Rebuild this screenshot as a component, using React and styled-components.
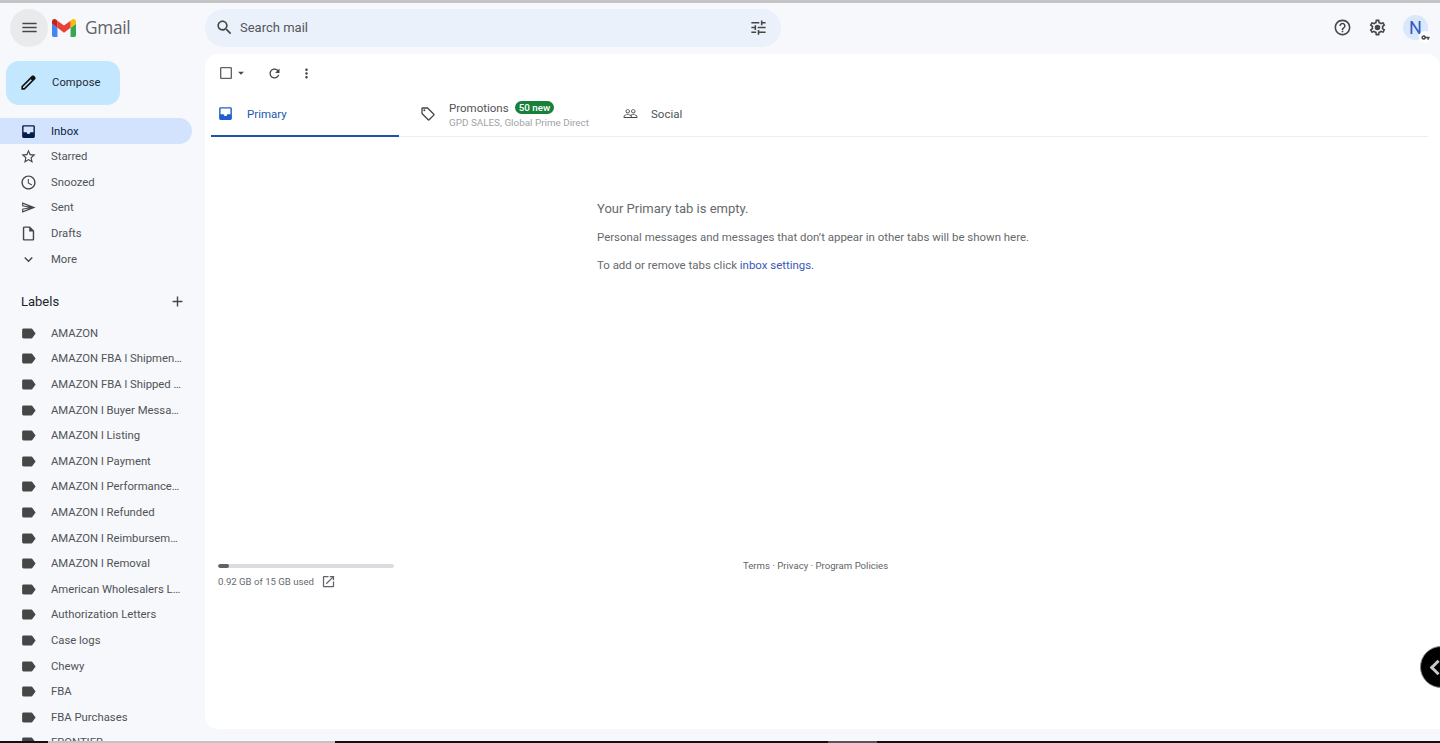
import styled, { createGlobalStyle } from "styled-components";

const GlobalStyle = createGlobalStyle`
  html, body {
    margin: 0;
    height: 100%;
    overflow: hidden;
  }
  body {
    background: #f6f8fc;
    font-family: Roboto, "Liberation Sans", sans-serif;
  }
  * {
    box-sizing: border-box;
  }
`;

const paths = {
  menu: "M3 18h18v-2H3v2zm0-5h18v-2H3v2zm0-7v2h18V6H3z",
  search:
    "M15.5 14h-.79l-.28-.27C15.41 12.59 16 11.11 16 9.5 16 5.91 13.09 3 9.5 3S3 5.91 3 9.5 5.91 16 9.5 16c1.61 0 3.09-.59 4.23-1.57l.27.28v.79l5 4.99L20.49 19l-4.99-5zm-6 0C7.01 14 5 11.99 5 9.5S7.01 5 9.5 5 14 7.01 14 9.5 11.99 14 9.5 14z",
  tune: "M3 17v2h6v-2H3zM3 5v2h10V5H3zm10 16v-2h8v-2h-8v-2h-2v6h2zM7 9v2H3v2h4v2h2V9H7zm14 4v-2H11v2h10zm-6-4h2V7h4V5h-4V3h-2v6z",
  help: "M11 18h2v-2h-2v2zm1-16C6.48 2 2 6.48 2 12s4.48 10 10 10 10-4.48 10-10S17.52 2 12 2zm0 18c-4.41 0-8-3.59-8-8s3.59-8 8-8 8 3.59 8 8-3.59 8-8 8zm0-14c-2.21 0-4 1.79-4 4h2c0-1.1.9-2 2-2s2 .9 2 2c0 2-3 1.75-3 5h2c0-2.25 3-2.5 3-5 0-2.21-1.79-4-4-4z",
  settings:
    "M19.43 12.98c.04-.32.07-.64.07-.98 0-.34-.03-.66-.07-.98l2.11-1.65c.19-.15.24-.42.12-.64l-2-3.46c-.09-.16-.26-.25-.44-.25-.06 0-.12.01-.17.03l-2.49 1c-.52-.4-1.08-.73-1.69-.98l-.38-2.65C14.46 2.18 14.25 2 14 2h-4c-.25 0-.46.18-.49.42l-.38 2.65c-.61.25-1.17.59-1.69.98l-2.49-1c-.06-.02-.12-.03-.18-.03-.17 0-.34.09-.43.25l-2 3.46c-.13.22-.07.49.12.64l2.11 1.65c-.04.32-.07.65-.07.98 0 .33.03.66.07.98l-2.11 1.65c-.19.15-.24.42-.12.64l2 3.46c.09.16.26.25.44.25.06 0 .12-.01.17-.03l2.49-1c.52.4 1.08.73 1.69.98l.38 2.65c.03.24.24.42.49.42h4c.25 0 .46-.18.49-.42l.38-2.65c.61-.25 1.17-.59 1.69-.98l2.49 1c.06.02.12.03.18.03.17 0 .34-.09.43-.25l2-3.46c.12-.22.07-.49-.12-.64l-2.11-1.65zm-1.98-1.71c.04.31.05.52.05.73 0 .21-.02.43-.05.73l-.14 1.13.89.7 1.08.84-.7 1.21-1.27-.51-1.04-.42-.9.68c-.43.32-.84.56-1.25.73l-1.06.43-.16 1.13-.2 1.35h-1.4l-.19-1.35-.16-1.13-1.06-.43c-.43-.18-.83-.41-1.23-.71l-.91-.7-1.06.43-1.27.51-.7-1.21 1.08-.84.89-.7-.14-1.13c-.03-.31-.05-.54-.05-.74s.02-.43.05-.73l.14-1.13-.89-.7-1.08-.84.7-1.21 1.27.51 1.04.42.9-.68c.43-.32.84-.56 1.25-.73l1.06-.43.16-1.13.2-1.35h1.39l.19 1.35.16 1.13 1.06.43c.43.18.83.41 1.23.71l.91.7 1.06-.43 1.27-.51.7 1.21-1.07.85-.89.7.14 1.13zM12 8.5a3.5 3.5 0 1 0 0 7 3.5 3.5 0 0 0 0-7z",
  pencil:
    "M20.41 4.94l-1.35-1.35c-.78-.78-2.05-.78-2.83 0L3 16.82V21h4.18L20.41 7.77c.79-.78.79-2.05 0-2.83zm-14 14.12L5 19v-1.36l9.82-9.82 1.41 1.41-9.82 9.83z",
  inbox:
    "M19 3H5c-1.1 0-2 .9-2 2v14c0 1.1.9 2 2 2h14c1.1 0 2-.9 2-2V5c0-1.1-.9-2-2-2zm0 10h-4.5c0 1.4-1.1 2.5-2.5 2.5S9.5 14.4 9.5 13H5V5h14v8z",
  star: "M22 9.24l-7.19-.62L12 2 9.19 8.63 2 9.24l5.46 4.73L5.82 21 12 17.27 18.18 21l-1.63-7.03L22 9.24zM12 15.4l-3.76 2.27 1-4.28-3.32-2.88 4.38-.38L12 6.1l1.71 4.04 4.38.38-3.32 2.88 1 4.28L12 15.4z",
  clock:
    "M11.99 2C6.47 2 2 6.48 2 12s4.47 10 9.99 10C17.52 22 22 17.52 22 12S17.52 2 11.99 2zM12 20c-4.42 0-8-3.58-8-8s3.58-8 8-8 8 3.58 8 8-3.58 8-8 8zm.5-13H11v6l5.25 3.15.75-1.23-4.5-2.67z",
  send: "M3 4.7L22 12 3 19.3v-5.7L12 12 3 10.4V4.7zM4.6 7v2.2l8.6 1.5L4.6 7zm0 10v-2.2l8.6-1.5L4.6 17z",
  draft:
    "M14 2H6c-1.1 0-1.99.9-1.99 2L4 20c0 1.1.89 2 1.99 2H18c1.1 0 2-.9 2-2V8l-6-6zM6 20V4h7v5h5v11H6z",
  more: "M16.59 8.59L12 13.17 7.41 8.59 6 10l6 6 6-6z",
  plus: "M19 13h-6v6h-2v-6H5v-2h6V5h2v6h6v2z",
  label:
    "M17.63 5.84C17.27 5.33 16.67 5 16 5L5 5.01C3.9 5.01 3 5.9 3 7v10c0 1.1.9 1.99 2 1.99L16 19c.67 0 1.27-.33 1.63-.84L22 12l-4.37-6.16z",
  tag: "M21.41 11.58l-9-9C12.05 2.22 11.55 2 11 2H4c-1.1 0-2 .9-2 2v7c0 .55.22 1.05.59 1.42l9 9c.36.36.86.58 1.41.58s1.05-.22 1.41-.59l7-7c.37-.36.59-.86.59-1.41s-.23-1.06-.59-1.42zM13 20.01L4 11V4h7v-.01l9 8.99-7 7.03zM6.5 5a1.5 1.5 0 1 0 0 3 1.5 1.5 0 0 0 0-3z",
  people:
    "M16.5 13c-1.2 0-3.07.34-4.5 1-1.43-.67-3.3-1-4.5-1C5.33 13 1 14.08 1 16.25V19h22v-2.75c0-2.17-4.33-3.25-6.5-3.25zm-4 4.5h-10v-1.25c0-.54 2.56-1.75 5-1.75s5 1.21 5 1.75v1.25zm9 0H14v-1.25c0-.46-.2-.86-.52-1.22.88-.3 1.96-.53 3.02-.53 2.44 0 5 1.21 5 1.75v1.25zM7.5 12c1.93 0 3.5-1.57 3.5-3.5S9.43 5 7.5 5 4 6.57 4 8.5 5.57 12 7.5 12zm0-5.5c1.1 0 2 .9 2 2s-.9 2-2 2-2-.9-2-2 .9-2 2-2zm9 5.5c1.93 0 3.5-1.57 3.5-3.5S18.43 5 16.5 5 13 6.57 13 8.5s1.57 3.5 3.5 3.5zm0-5.5c1.1 0 2 .9 2 2s-.9 2-2 2-2-.9-2-2 .9-2 2-2z",
  refresh:
    "M17.65 6.35C16.2 4.9 14.21 4 12 4c-4.42 0-7.99 3.58-7.99 8s3.57 8 7.99 8c3.73 0 6.84-2.55 7.73-6h-2.08c-.82 2.33-3.04 4-5.65 4-3.31 0-6-2.69-6-6s2.69-6 6-6c1.66 0 3.14.69 4.22 1.78L13 11h7V4l-2.35 2.35z",
  dots: "M12 8c1.1 0 2-.9 2-2s-.9-2-2-2-2 .9-2 2 .9 2 2 2zm0 2c-1.1 0-2 .9-2 2s.9 2 2 2 2-.9 2-2-.9-2-2-2zm0 6c-1.1 0-2 .9-2 2s.9 2 2 2 2-.9 2-2-.9-2-2-2z",
  checkbox:
    "M19 5v14H5V5h14m0-2H5c-1.1 0-2 .9-2 2v14c0 1.1.9 2 2 2h14c1.1 0 2-.9 2-2V5c0-1.1-.9-2-2-2z",
  caret: "M7 10l5 5 5-5z",
  open: "M19 19H5V5h7V3H5c-1.11 0-2 .9-2 2v14c0 1.1.89 2 2 2h14c1.1 0 2-.9 2-2v-7h-2v7zM14 3v2h3.59l-9.83 9.83 1.41 1.41L19 6.41V10h2V3h-7z",
  key: "M12.65 10A6 6 0 1 0 12.65 14H17v4h4v-4h2v-4H12.65zM7 14a2 2 0 1 1 0-4 2 2 0 0 1 0 4z",
};

const Svg = styled.svg`
  display: block;
  flex: none;
  width: ${(props) => props.$size || 18}px;
  height: ${(props) => props.$size || 18}px;
  fill: ${(props) => props.$color || "#444746"};
`;

const Icon = ({ name, size, color }) => (
  <Svg viewBox="0 0 24 24" $size={size} $color={color}>
    <path d={paths[name]} fillRule="evenodd" />
  </Svg>
);

const Page = styled.div`
  position: relative;
  height: 743px;
  overflow: hidden;
  display: flex;
  flex-direction: column;
`;

const TopEdge = styled.div`
  height: 3px;
  flex: none;
  background: #c4c4c6;
`;

const Header = styled.header`
  height: 51px;
  flex: none;
  display: flex;
  align-items: center;
  padding: 0 12px 2px 10px;
`;

const MenuButton = styled.div`
  width: 38px;
  height: 38px;
  border-radius: 50%;
  background: #e9eaec;
  display: flex;
  align-items: center;
  justify-content: center;
  flex: none;
`;

const Brand = styled.div`
  width: 157px;
  flex: none;
  display: flex;
  align-items: center;
  gap: 9px;
  padding-left: 4px;
`;

const BrandName = styled.span`
  font-family: "Open Sans", Roboto, sans-serif;
  font-size: 17.3px;
  letter-spacing: -0.3px;
  color: #5f6368;
`;

const SearchBar = styled.div`
  width: 576px;
  height: 38px;
  border-radius: 19px;
  background: #eaf1fb;
  display: flex;
  align-items: center;
  padding: 0 13px 0 10px;
  flex: none;
`;

const SearchText = styled.span`
  flex: 1;
  margin-left: 6px;
  font-size: 13px;
  color: #54575a;
`;

const HeaderActions = styled.div`
  margin-left: auto;
  display: flex;
  align-items: center;
  gap: 16px;
`;

const Avatar = styled.div`
  position: relative;
  width: 25px;
  height: 25px;
  border-radius: 50%;
  background: #dbe7fb;
  color: #2f5cc4;
  font-size: 18px;
  line-height: 25px;
  text-align: center;
`;

const KeyBadge = styled.div`
  position: absolute;
  right: -3px;
  bottom: -3px;
  width: 12px;
  height: 12px;
  border-radius: 50%;
  background: #fff;
  display: flex;
  align-items: center;
  justify-content: center;
`;

const Body = styled.div`
  flex: 1;
  min-height: 0;
  display: flex;
`;

const Sidebar = styled.nav`
  width: 205px;
  flex: none;
  overflow: hidden;
`;

const ComposeButton = styled.div`
  margin: 7px 0 0 6px;
  width: 114px;
  height: 44px;
  border-radius: 13px;
  background: #c2e7ff;
  display: flex;
  align-items: center;
  padding: 0 0 1px 13px;
  gap: 14px;
  font-size: 11.2px;
  letter-spacing: 0.1px;
  color: #1f2a37;
`;

const NavList = styled.div`
  margin-top: 13.4px;
`;

const NavRow = styled.div`
  height: 25.6px;
  width: 192px;
  border-radius: 0 13px 13px 0;
  display: flex;
  align-items: center;
  gap: 14px;
  padding-left: 20px;
  font-size: 11.3px;
  color: ${(props) => (props.$active ? "#041e49" : "#505357")};
  background: ${(props) => (props.$active ? "#d3e3fd" : "transparent")};
`;

const RowText = styled.span`
  width: 131px;
  white-space: nowrap;
  overflow: hidden;
  text-overflow: ellipsis;
`;

const LabelsHeader = styled.div`
  display: flex;
  align-items: center;
  justify-content: space-between;
  width: 192px;
  height: 20px;
  margin-top: 20px;
  margin-bottom: 8.6px;
  padding: 0 6px 0 21px;
  font-size: 13px;
  color: #1f1f1f;
`;

const Panel = styled.main`
  flex: 1;
  height: 675px;
  border-radius: 13px 13px 0 13px;
  background: #fff;
  display: flex;
  flex-direction: column;
  padding-right: 12px;
`;

const Toolbar = styled.div`
  height: 38px;
  flex: none;
  display: flex;
  align-items: center;
  padding-left: 13px;
`;

const ToolbarGroup = styled.div`
  display: flex;
  align-items: center;
  margin-right: ${(props) => props.$gap || 0}px;
`;

const Tabs = styled.div`
  height: 45px;
  margin-left: 6px;
  flex: none;
  display: flex;
  border-bottom: 1px solid #eceff1;
`;

const Tab = styled.div`
  width: ${(props) => props.$width}px;
  display: flex;
  align-items: center;
  gap: ${(props) => props.$gap}px;
  padding-left: ${(props) => props.$indent}px;
  margin-bottom: -1px;
  border-bottom: 2px solid ${(props) => (props.$active ? "#1c54a8" : "transparent")};
  font-size: 11.5px;
  color: ${(props) => (props.$active ? "#1c56b4" : "#505357")};
`;

const TabLines = styled.div`
  display: flex;
  flex-direction: column;
  gap: 2px;
  padding-top: 1px;
`;

const TabTitle = styled.div`
  display: flex;
  align-items: center;
  gap: 6px;
`;

const Badge = styled.span`
  height: 13px;
  line-height: 13px;
  padding: 0 4px;
  border-radius: 7px;
  background: #188038;
  color: #fff;
  font-size: 9.8px;
  font-weight: 500;
`;

const TabHint = styled.span`
  font-size: 9.9px;
  color: #a0a4a8;
  white-space: nowrap;
`;

const Empty = styled.section`
  flex: 1;
  padding: 64px 0 0 392px;
  font-size: 11.45px;
  color: #666a6e;
`;

const EmptyTitle = styled.div`
  font-size: 13px;
  line-height: 16px;
  margin-bottom: 12px;
`;

const EmptyLine = styled.div`
  line-height: 16px;
  margin-bottom: 12px;
`;

const SettingsLink = styled.span`
  color: #3b59b5;
`;

const PanelFooter = styled.footer`
  height: 173px;
  flex: none;
  display: flex;
  padding: 8px 0 0 13px;
`;

const Storage = styled.div`
  width: 176px;
  flex: none;
`;

const StorageTrack = styled.div`
  height: 4px;
  border-radius: 2px;
  background: #dadce0;
  overflow: hidden;
`;

const StorageFill = styled.div`
  height: 100%;
  border-radius: 2px;
  background: #5f6368;
`;

const StorageText = styled.div`
  margin-top: 6px;
  display: flex;
  align-items: center;
  gap: 7px;
  font-size: 9.6px;
  color: #666a6e;
`;

const FooterLinks = styled.div`
  margin-left: 349px;
  margin-top: -5px;
  font-size: 9.6px;
  line-height: 14px;
  color: #5f6368;
`;

const BottomEdge = styled.div`
  position: absolute;
  left: 0;
  right: 0;
  bottom: 0;
  height: 2px;
  background: linear-gradient(
    to right,
    #111 0 48px,
    #c4c4c6 48px 335px,
    #111 335px 828px,
    #55565a 828px 877px,
    #111 877px
  );
`;

const FloatingHandle = styled.div`
  position: absolute;
  right: -22px;
  top: 646px;
  width: 42px;
  height: 42px;
  border-radius: 50%;
  background: #000;
  border: 1px solid #85888c;
  display: flex;
  align-items: center;
  padding-left: 11px;
`;

const Chevron = styled.div`
  width: 11px;
  height: 11px;
  border-left: 3px solid #c9c9c9;
  border-bottom: 3px solid #c9c9c9;
  transform: rotate(45deg);
`;

const mainNav = [
  { icon: "inbox", text: "Inbox", active: true },
  { icon: "star", text: "Starred" },
  { icon: "clock", text: "Snoozed" },
  { icon: "send", text: "Sent" },
  { icon: "draft", text: "Drafts" },
  { icon: "more", text: "More" },
];

const labels = [
  "AMAZON",
  "AMAZON FBA l Shipment Updates",
  "AMAZON FBA l Shipped Orders",
  "AMAZON l Buyer Messages",
  "AMAZON l Listing",
  "AMAZON l Payment",
  "AMAZON l Performance Notices",
  "AMAZON l Refunded",
  "AMAZON l Reimbursements",
  "AMAZON l Removal",
  "American Wholesalers List",
  "Authorization Letters",
  "Case logs",
  "Chewy",
  "FBA",
  "FBA Purchases",
  "FRONTIER",
];

const GmailLogo = () => (
  <svg width="24" height="18" viewBox="52 42 88 66">
    <path fill="#4285f4" d="M58 108h14V74L52 59v43c0 3.32 2.69 6 6 6" />
    <path fill="#34a853" d="M120 108h14c3.32 0 6-2.69 6-6V59l-20 15" />
    <path fill="#fbbc04" d="M120 48v26l20-15v-8c0-7.42-8.47-11.65-14.4-7.2" />
    <path fill="#ea4335" d="M72 74V48l24 18 24-18v26L96 92" />
    <path fill="#c5221f" d="M52 51v8l20 15V48l-5.6-4.2c-5.94-4.45-14.4-.22-14.4 7.2" />
  </svg>
);

const App = () => {
  return (
    <>
      <GlobalStyle />
      <Page>
        <TopEdge />
        <Header>
          <MenuButton>
            <Icon name="menu" size={19} color="#444746" />
          </MenuButton>
          <Brand>
            <GmailLogo />
            <BrandName>Gmail</BrandName>
          </Brand>
          <SearchBar>
            <Icon name="search" size={19} color="#444746" />
            <SearchText>Search mail</SearchText>
            <Icon name="tune" size={19} color="#444746" />
          </SearchBar>
          <HeaderActions>
            <Icon name="help" size={19} />
            <Icon name="settings" size={19} />
            <Avatar>
              N
              <KeyBadge>
                <Icon name="key" size={9} color="#444746" />
              </KeyBadge>
            </Avatar>
          </HeaderActions>
        </Header>
        <Body>
          <Sidebar>
            <ComposeButton>
              <Icon name="pencil" size={19} color="#111" />
              Compose
            </ComposeButton>
            <NavList>
              {mainNav.map((item) => (
                <NavRow key={item.text} $active={item.active}>
                  <Icon
                    name={item.icon}
                    size={17}
                    color={item.active ? "#041e49" : "#444746"}
                  />
                  <RowText>{item.text}</RowText>
                </NavRow>
              ))}
            </NavList>
            <LabelsHeader>
              Labels
              <Icon name="plus" size={17} />
            </LabelsHeader>
            {labels.map((label) => (
              <NavRow key={label}>
                <Icon name="label" size={17} color="#444746" />
                <RowText>{label}</RowText>
              </NavRow>
            ))}
          </Sidebar>
          <Panel>
            <Toolbar>
              <ToolbarGroup $gap={19}>
                <Icon name="checkbox" size={16} color="#5f6368" />
                <Icon name="caret" size={14} color="#444746" />
              </ToolbarGroup>
              <ToolbarGroup $gap={17}>
                <Icon name="refresh" size={15} color="#444746" />
              </ToolbarGroup>
              <ToolbarGroup>
                <Icon name="dots" size={15} color="#444746" />
              </ToolbarGroup>
            </Toolbar>
            <Tabs>
              <Tab $active $width={188} $gap={13} $indent={6}>
                <Icon name="inbox" size={17} color="#1c5fd0" />
                Primary
              </Tab>
              <Tab $width={212} $gap={13} $indent={21}>
                <Icon name="tag" size={16} color="#444746" />
                <TabLines>
                  <TabTitle>
                    Promotions
                    <Badge>50 new</Badge>
                  </TabTitle>
                  <TabHint>GPD SALES, Global Prime Direct</TabHint>
                </TabLines>
              </Tab>
              <Tab $width={140} $gap={13} $indent={12}>
                <Icon name="people" size={15} color="#444746" />
                Social
              </Tab>
            </Tabs>
            <Empty>
              <EmptyTitle>Your Primary tab is empty.</EmptyTitle>
              <EmptyLine>
                Personal messages and messages that don’t appear in other tabs
                will be shown here.
              </EmptyLine>
              <EmptyLine>
                To add or remove tabs click{" "}
                <SettingsLink>inbox settings.</SettingsLink>
              </EmptyLine>
            </Empty>
            <PanelFooter>
              <Storage>
                <StorageTrack>
                  <StorageFill style={{ width: `${(0.92 / 15) * 100}%` }} />
                </StorageTrack>
                <StorageText>
                  0.92 GB of 15 GB used
                  <Icon name="open" size={15} color="#5f6368" />
                </StorageText>
              </Storage>
              <FooterLinks>Terms · Privacy · Program Policies</FooterLinks>
            </PanelFooter>
          </Panel>
        </Body>
        <FloatingHandle>
          <Chevron />
        </FloatingHandle>
        <BottomEdge />
      </Page>
    </>
  );
};

export default App;
